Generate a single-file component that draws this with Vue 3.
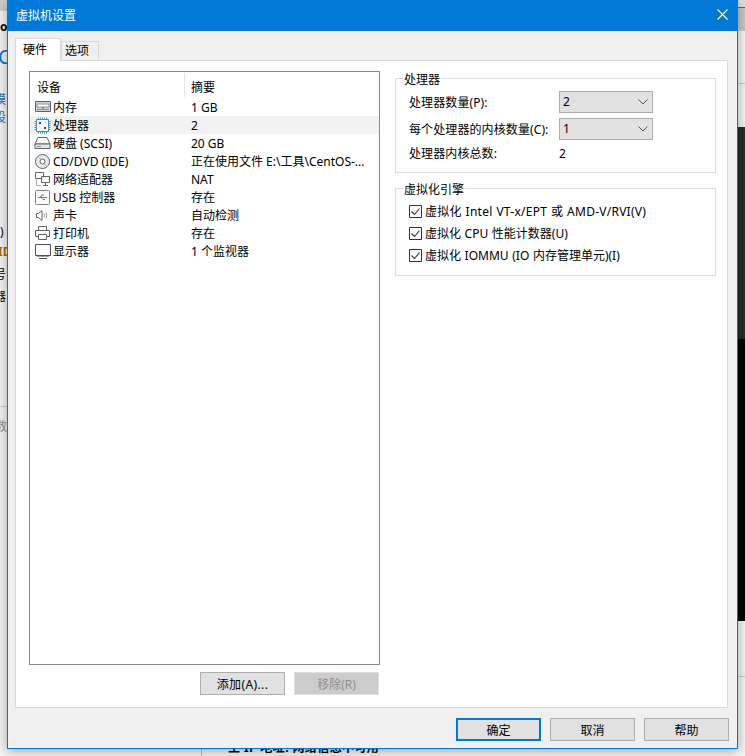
<script setup>
const ink = '#5f6368'
const rows = [
  { name: '内存', value: '1 GB', icon: [
    { d: 'M1.5 2.5h15v10h-15z', f: '#cfd3d8', s: ink },
    { d: 'M3 5h12v3H3z', f: '#fff', s: '#8a9097' },
    { d: 'M3 10.5h12', f: 'none', s: '#8a9097' },
    { d: 'M9 8v2', f: 'none', s: ink }
  ] },
  { name: '处理器', value: '2', selected: true, icon: [
    { d: 'M4.5 .5v16M6.5 .5v16M8.5 .5v16M10.5 .5v16M12.5 .5v16M.5 4.5h16M.5 6.5h16M.5 8.5h16M.5 10.5h16M.5 12.5h16', f: 'none', s: '#3ba0e6' },
    { d: 'M2.5 2.5h12v12h-12z', f: '#f3f8fc', s: '#4a88b8' },
    { d: 'M5 5h2v2H5zM10 10h2v2h-2z', f: '#33424f', s: 'none' }
  ] },
  { name: '硬盘 (SCSI)', value: '20 GB', icon: [
    { d: 'M4 2.5h9l3 6.5H1z', f: '#fff', s: ink },
    { d: 'M1 9h15v4.5H1z', f: '#e3e5e8', s: ink },
    { d: 'M3 11.5h4', f: 'none', s: '#8a9097' }
  ] },
  { name: 'CD/DVD (IDE)', value: '正在使用文件 E:\\工具\\CentOS-...', icon: [
    { d: 'M8.5 1.5a7 7 0 1 0 0 14a7 7 0 1 0 0-14z', f: '#e9eaec', s: ink },
    { d: 'M8.5 6a2.5 2.5 0 1 0 0 5a2.5 2.5 0 1 0 0-5z', f: '#fff', s: ink },
    { d: 'M5 4.5l2 2M12 12.5l-2-2', f: 'none', s: '#9aa0a6' }
  ] },
  { name: '网络适配器', value: 'NAT', icon: [
    { d: 'M1.5 1.5h8v6h-8z', f: '#fff', s: ink },
    { d: 'M7.5 5.5h8v6h-8z', f: '#fff', s: ink },
    { d: 'M11.5 11.5v3M9 14.5h5', f: 'none', s: ink },
    { d: 'M2.5 7.5v7h4', f: 'none', s: '#a6abb0' }
  ] },
  { name: 'USB 控制器', value: '存在', icon: [
    { d: 'M2.5 1.5h12a1 1 0 0 1 1 1v12a1 1 0 0 1-1 1h-12a1 1 0 0 1-1-1v-12a1 1 0 0 1 1-1z', f: '#fafafa', s: '#7b8085' },
    { d: 'M4 8.5h9M6 8.5l2-2.5h2M7 8.5l2 2h2', f: 'none', s: '#5b7f9c' }
  ] },
  { name: '声卡', value: '自动检测', icon: [
    { d: 'M2.5 6.5h2l3.5-3v10l-3.5-3h-2z', f: '#fff', s: ink },
    { d: 'M10 6.5c.6 1.3.6 2.7 0 4M12 5.5c.9 1.8.9 4.2 0 6', f: 'none', s: '#8a9097' }
  ] },
  { name: '打印机', value: '存在', icon: [
    { d: 'M4.5 1.5h8v4h-8z', f: '#fff', s: ink },
    { d: 'M1.5 5.5h14v6h-14z', f: '#fff', s: ink },
    { d: 'M4.5 9.5h8v5h-8z', f: '#fff', s: ink }
  ] },
  { name: '显示器', value: '1 个监视器', icon: [
    { d: 'M1.5 1.5h15v11h-15z', f: '#fff', s: '#4d5257' },
    { d: 'M3 13.5h12', f: 'none', s: '#9aa0a6' },
    { d: 'M5 15.5h8', f: 'none', s: '#4d5257' }
  ] }
]
const processors = [
  { label: '处理器数量(P):', value: '2' },
  { label: '每个处理器的内核数量(C):', value: '1' }
]
const engines = [
  { text: '虚拟化 Intel VT-x/EPT 或 AMD-V/RVI(V)', wide: true },
  { text: '虚拟化 CPU 性能计数器(U)', wide: false },
  { text: '虚拟化 IOMMU (IO 内存管理单元)(I)', wide: false }
]
const behind = [
  { t: 'o', c: 'frag f1' }, { t: 'C', c: 'frag f2' }, { t: '模', c: 'frag f3' },
  { t: '设', c: 'frag f4' }, { t: ')', c: 'frag f5' }, { t: 'ID', c: 'frag f6' },
  { t: '号', c: 'frag f7' }, { t: '器', c: 'frag f8' }, { t: '数', c: 'frag f9' }
]
</script>

<template>
  <div class="desktop">
    <div class="shade s-top"></div>
    <div class="shade s-edge"></div>
    <div class="shade s-head"></div>
    <div class="shade s-left"></div>
    <div class="shade s-line0"></div>
    <div class="shade s-line1"></div>
    <div class="shade s-dark"></div>
    <div class="shade s-black"></div>
    <div class="shade s-line2"></div>
    <span v-for="b in behind" :key="b.c" :class="b.c">{{ b.t }}</span>
    <div class="rule"></div>
    <div class="ip">主 IP 地址: 网络信息不可用</div>

    <section class="window">
      <header class="titlebar">
        <span>虚拟机设置</span>
        <svg class="close" width="11" height="11" viewBox="0 0 11 11"><path d="M.5.5l10 10M10.5.5l-10 10" stroke="#fff" fill="none" stroke-width="1.1" /></svg>
      </header>

      <div class="body">
        <nav class="tabs">
          <div class="tab active">硬件</div>
          <div class="tab">选项</div>
        </nav>

        <main class="panel">
          <div class="left">
            <div class="list">
              <div class="list-head">
                <div class="col-a">设备</div>
                <div class="col-b">摘要</div>
              </div>
              <div v-for="r in rows" :key="r.name" class="row" :class="{ selected: r.selected }">
                <svg class="ico" width="17" height="17" viewBox="0 0 17 17">
                  <path v-for="(p, i) in r.icon" :key="i" :d="p.d" :fill="p.f" :stroke="p.s" />
                </svg>
                <span class="row-name">{{ r.name }}</span>
                <span class="row-value">{{ r.value }}</span>
              </div>
            </div>
            <div class="list-actions">
              <button class="btn spaced">添加(A)...</button>
              <button class="btn disabled">移除(R)</button>
            </div>
          </div>

          <div class="right">
            <fieldset class="group g1">
              <legend>处理器</legend>
              <div v-for="p in processors" :key="p.label" class="field">
                <label>{{ p.label }}</label>
                <div class="select">
                  <span>{{ p.value }}</span>
                  <svg width="10" height="6" viewBox="0 0 10 6"><path d="M.5.5l4.5 4.5L9.5.5" fill="none" stroke="#555" /></svg>
                </div>
              </div>
              <div class="field total">
                <label>处理器内核总数:</label>
                <span>2</span>
              </div>
            </fieldset>

            <fieldset class="group g2">
              <legend>虚拟化引擎</legend>
              <div v-for="e in engines" :key="e.text" class="check">
                <svg width="13" height="13" viewBox="0 0 13 13">
                  <path d="M.5.5h12v12H.5z" fill="#fff" stroke="#333" />
                  <path d="M2.5 6.5l3 3 5-6" fill="none" stroke="#333" stroke-width="1.1" />
                </svg>
                <span :class="{ wide: e.wide }">{{ e.text }}</span>
              </div>
            </fieldset>
          </div>
        </main>

        <footer class="footer">
          <button class="btn primary">确定</button>
          <button class="btn">取消</button>
          <button class="btn">帮助</button>
        </footer>
      </div>
    </section>
  </div>
</template>

<style>
html, body { margin: 0; padding: 0; }
</style>

<style scoped>
.desktop {
  position: relative;
  width: 745px;
  height: 756px;
  overflow: hidden;
  background: #f6f6f6;
  font-family: "Noto Sans", "Noto Sans CJK SC", sans-serif;
  font-size: 12px;
  color: #000;
}
.shade { position: absolute; }
.s-top { left: 735px; top: 0; width: 10px; height: 7px; background: #dedede; }
.s-edge { left: 735px; top: 7px; width: 10px; height: 1px; background: #666; }
.s-head { left: 735px; top: 8px; width: 10px; height: 23px; background: #c9c9c9; }
.s-left { left: 0; top: 0; width: 7px; height: 11px; background: #cfcfcf; }
.s-line0 { left: 0; top: 406px; width: 7px; height: 1px; background: #cfcfcf; }
.s-line1 { left: 735px; top: 83px; width: 10px; height: 1px; background: #c8c8c8; }
.s-dark { left: 735px; top: 127px; width: 10px; height: 212px; background: #2b2b2b; }
.s-black { left: 735px; top: 339px; width: 10px; height: 282px; background: #000; }
.s-line2 { left: 735px; top: 676px; width: 10px; height: 1px; background: #c8c8c8; }
.frag { position: absolute; left: 0; line-height: 14px; }
.f1 { top: 20px; font-weight: 700; }
.f2 { top: 50px; color: #0078d7; font-size: 20px; left: -2px; }
.f3 { top: 93px; color: #2a6fb5; left: -6px; }
.f4 { top: 111px; color: #2a6fb5; left: -6px; }
.f5 { top: 225px; left: 0; }
.f6 { top: 245px; left: -2px; color: #b26a00; font-weight: 700; }
.f7 { top: 268px; left: -6px; }
.f8 { top: 290px; left: -6px; }
.f9 { top: 420px; left: -5px; color: #888; }
.rule { position: absolute; left: 201px; top: 745px; width: 1px; height: 11px; background: #bdbdbd; }
.ip { position: absolute; left: 228px; top: 740px; font-weight: 700; font-size: 12px; line-height: 16px; letter-spacing: 0.4px; }

.window {
  position: absolute;
  left: 7px;
  top: 0;
  width: 731px;
  height: 749px;
  box-sizing: border-box;
  border: 1px solid #0078d7;
  border-top: 0;
  background: #f0f0f0;
  box-shadow: 0 2px 12px rgba(0, 0, 0, 0.35);
  display: flex;
  flex-direction: column;
}
.titlebar {
  box-sizing: border-box;
  height: 31px;
  flex: none;
  background: #0078d7;
  color: #fff;
  display: flex;
  align-items: center;
  justify-content: space-between;
  padding: 0 9px 2px 8px;
}
.body {
  flex: 1;
  display: flex;
  flex-direction: column;
  padding: 7px 9px 0 7px;
  min-height: 0;
}
.tabs { display: flex; align-items: flex-end; height: 22px; flex: none; position: relative; z-index: 1; }
.tab {
  box-sizing: border-box;
  width: 38px;
  height: 19px;
  padding-left: 3px;
  border: 1px solid #d9d9d9;
  border-bottom: 0;
  background: #f0f0f0;
  line-height: 18px;
}
.tab.active {
  width: 46px;
  height: 23px;
  padding-left: 7px;
  background: #fff;
  line-height: 21px;
  margin-bottom: -1px;
  border-right: 1px solid #d9d9d9;
}
.panel {
  box-sizing: border-box;
  height: 648px;
  flex: none;
  background: #fff;
  border: 1px solid #d9d9d9;
  display: flex;
  padding: 10px 11px 0 13px;
}
.left { width: 351px; flex: none; display: flex; flex-direction: column; }
.list {
  box-sizing: border-box;
  height: 594px;
  border: 1px solid #828790;
  flex: none;
}
.list-head { display: flex; height: 26px; align-items: center; }
.col-a { padding-left: 7px; height: 24px; line-height: 29px; width: 147px; }
.col-b { border-left: 1px solid #e5e5e5; padding-left: 6px; height: 24px; line-height: 29px; }
.row { display: flex; align-items: center; height: 18px; }
.row.selected { background: #f2f2f2; }
.ico { margin-left: 4px; flex: none; }
.row-name { width: 138px; flex: none; margin-left: 2px; white-space: nowrap; }
.row-value { white-space: nowrap; }
.list-actions {
  display: flex;
  justify-content: flex-end;
  gap: 9px;
  padding: 7px 1px 0 0;
}
.btn {
  box-sizing: border-box;
  width: 85px;
  height: 23px;
  padding: 0;
  background: #e1e1e1;
  border: 1px solid #adadad;
  font: inherit;
  color: #000;
}
.btn.spaced { letter-spacing: 0.4px; }
.btn.disabled { background: #cccccc; border-color: #e0e0e0; color: #8f8f8f; }
.btn.primary { border: 2px solid #0078d7; }
.right { margin-left: 15px; flex: 1; display: flex; flex-direction: column; }
.group {
  margin: 0;
  padding: 0 0 0 13px;
  border: 1px solid #dcdcdc;
  min-width: 0;
  box-sizing: border-box;
}
.group legend { padding: 0 1px; margin-left: -6px; height: 14px; line-height: 18px; }
.g1 { height: 102px; }
.g2 { height: 95px; margin-top: 8px; }
.field { display: flex; align-items: center; height: 23px; margin-bottom: 4px; }
.g1 .field:first-of-type { margin-top: 5px; }
.field label { width: 150px; flex: none; white-space: nowrap; letter-spacing: 0.1px; }
.select {
  box-sizing: border-box;
  width: 94px;
  height: 22px;
  background: #e1e1e1;
  border: 1px solid #adadad;
  display: flex;
  align-items: center;
  justify-content: space-between;
  padding: 0 4px 0 3px;
}
.total { height: 18px; margin-bottom: 0; }
.check { display: flex; align-items: center; height: 22px; gap: 3px; white-space: nowrap; word-spacing: 0.5px; }
.wide { letter-spacing: 0.25px; }
.g2 .check:first-of-type { margin-top: 5px; }
.footer {
  display: flex;
  justify-content: flex-end;
  gap: 9px;
  padding: 10px 0 0 0;
  margin-right: -1px;
}
</style>
